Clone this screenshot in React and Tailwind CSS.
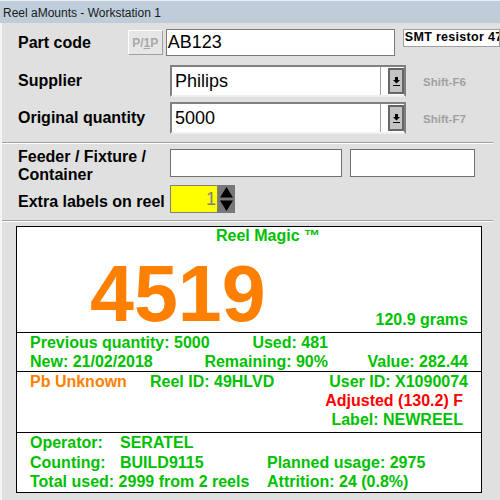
import React from "react";

const ArrowDown = () => (
  <svg width="7" height="9" viewBox="0 0 7 9">
    <rect x="2" y="0" width="3" height="3" fill="#000" />
    <polygon points="0,3 7,3 3.5,6.5" fill="#000" />
    <rect x="0" y="8" width="7" height="1" fill="#000" />
  </svg>
);

const Spinner = () => (
  <svg width="17" height="28" viewBox="0 0 17 28">
    <polygon points="2,12.5 15,12.5 8.5,2" fill="#000" />
    <polygon points="2,15.5 15,15.5 8.5,26" fill="#000" />
  </svg>
);

const Combo = ({ value }) => (
  <div className="flex h-[32px] w-[236px] border-2 border-[#808080] border-b-[#f0f0f0] bg-white">
    <div className="flex w-[209px] items-center border-r border-[#a0a0a0] pl-[3px] text-[18px]">
      {value}
    </div>
    <div className="w-[7px]" />
    <div className="my-[1px] flex w-[16px] items-center justify-center border-2 border-[#666666] bg-[#c4c4c4]">
      <ArrowDown />
    </div>
  </div>
);

const Separator = ({ className }) => (
  <div className={`h-[2px] w-[491px] border-t border-b border-t-[#a0a0a0] border-b-white ${className}`} />
);

export default function App() {
  return (
    <div className="h-[500px] w-[500px] overflow-hidden bg-[#e0e0e0] font-['Liberation_Sans',Arial,sans-serif] text-black">
      <div className="h-[23px] whitespace-nowrap border-t border-[#e8edf2] bg-[#bfcddb] pl-[3px] pt-[4px] text-[12px] leading-[16px] text-[#1a1a1a]">
        Reel aMounts - Workstation 1
      </div>

      <div className="flex h-[477px] flex-col border-l-2 border-[#f4f4f4]">
        {/* Part code */}
        <div className="ml-[16px] mt-[6px] flex h-[27px] items-center">
          <div className="w-[113px] text-[16px] font-bold leading-[18px]">Part code</div>
          <div className="flex h-[25px] w-[36px] items-center justify-center border border-b-[#a0a0a0] border-l-white border-r-[#a0a0a0] border-t-white bg-[#e6e6e6] text-[12px] font-bold text-[#a8a8a8]">
            P/<span className="underline">1</span>P
          </div>
          <div className="ml-[3px] flex h-[27px] w-[236px] items-center border border-[#7a7a7a] bg-white pl-[1px] text-[18px]">
            AB123
          </div>
          <div className="ml-[8px] h-[18px] w-[100px] self-start overflow-hidden whitespace-nowrap border border-[#a0a0a0] bg-white pl-[1px] text-[12.5px] font-bold leading-[15px] tracking-[0.3px]">
            SMT resistor 47
          </div>
        </div>

        {/* Supplier */}
        <div className="ml-[16px] mt-[9px] flex h-[32px] items-center">
          <div className="w-[152px] text-[16px] font-bold leading-[18px]">Supplier</div>
          <Combo value="Philips" />
          <div className="ml-[17px] mt-[3px] text-[11.5px] font-bold text-[#a0a0a0]">Shift-F6</div>
        </div>

        {/* Original quantity */}
        <div className="ml-[16px] mt-[5px] flex h-[32px] items-center">
          <div className="w-[152px] text-[16px] font-bold leading-[18px]">Original quantity</div>
          <Combo value="5000" />
          <div className="ml-[17px] mt-[3px] text-[11.5px] font-bold text-[#a0a0a0]">Shift-F7</div>
        </div>

        <Separator className="mt-[8px]" />

        {/* Feeder */}
        <div className="ml-[16px] mt-[4px] flex h-[37px] items-start">
          <div className="w-[152px] whitespace-nowrap text-[16px] font-bold leading-[18px]">
            Feeder / Fixture /<br />Container
          </div>
          <div className="mt-[1px] h-[28px] w-[172px] border border-[#707070] bg-white" />
          <div className="ml-[8px] mt-[1px] h-[28px] w-[125px] border border-[#707070] bg-white" />
        </div>

        {/* Extra labels */}
        <div className="ml-[16px] flex h-[28px] items-center">
          <div className="mt-[5px] w-[152px] text-[16px] font-bold leading-[18px]">Extra labels on reel</div>
          <div className="flex h-[28px] w-[48px] items-center justify-end border border-[#808080] bg-[#ffff00] pr-[1px] text-[18px] text-[#808080]">
            1
          </div>
          <div className="h-[28px] w-[17px] bg-[#787878]">
            <Spinner />
          </div>
        </div>

        <Separator className="mt-[7px]" />

        {/* Reel box */}
        <div className="ml-[14px] mt-[4px] flex h-[267px] w-[466px] flex-col border border-black bg-white text-[16px] font-bold text-[#00c000]">
          <div className="flex h-[106px] flex-col border-b border-black">
            <div className="whitespace-nowrap pl-[199px] leading-[18px]">Reel Magic ™</div>
            <div className="flex flex-1 items-end justify-between pb-[3px] pl-[73px] pr-[13px]">
              <div className="h-[70px] overflow-hidden text-[79px] leading-[70px] text-[#ff8000]">4519</div>
              <div className="leading-[18px]">120.9 grams</div>
            </div>
          </div>

          <div className="flex h-[39px] flex-col whitespace-nowrap border-b border-black pl-[13px] pr-[13px] leading-[19px]">
            <div className="flex w-[298px] justify-between">
              <div>Previous quantity: 5000</div>
              <div>Used: 481</div>
            </div>
            <div className="flex">
              <div className="flex w-[298px] justify-between">
                <div>New: 21/02/2018</div>
                <div>Remaining: 90%</div>
              </div>
              <div className="flex-1 text-right">Value: 282.44</div>
            </div>
          </div>

          <div className="flex h-[61px] flex-col whitespace-nowrap border-b border-black pl-[13px] pr-[13px] leading-[19px]">
            <div className="flex">
              <div className="w-[120px] text-[#ff8000]">Pb Unknown</div>
              <div>Reel ID: 49HLVD</div>
              <div className="ml-auto">User ID: X1090074</div>
            </div>
            <div className="pr-[5px] text-right text-[#ff0000]">Adjusted (130.2) F</div>
            <div className="pr-[5px] text-right">Label: NEWREEL</div>
          </div>

          <div className="grid h-[59px] grid-cols-[90px_147px_1fr] whitespace-nowrap pl-[13px] leading-[19px]">
            <div>Operator:</div>
            <div>SERATEL</div>
            <div />
            <div>Counting:</div>
            <div>BUILD9115</div>
            <div>Planned usage: 2975</div>
            <div className="col-span-2">Total used: 2999 from 2 reels</div>
            <div>Attrition: 24 (0.8%)</div>
          </div>
        </div>
      </div>
    </div>
  );
}
